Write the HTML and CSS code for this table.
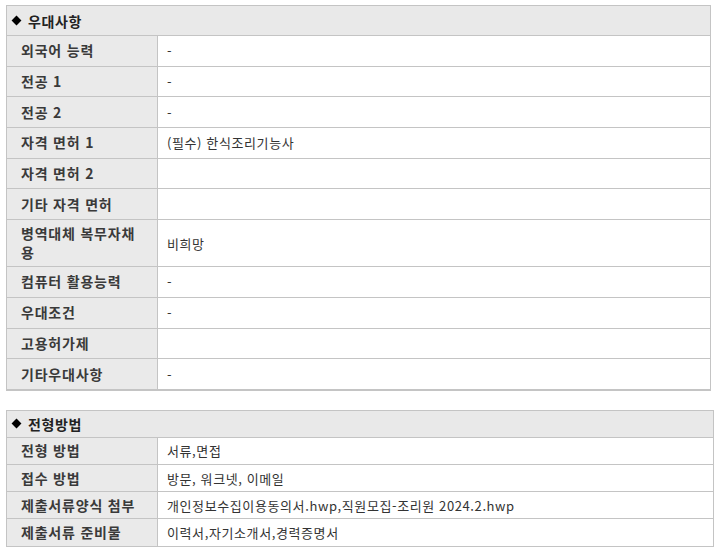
FILE: index.html
```html
<!DOCTYPE html>
<html lang="ko">
<head>
<meta charset="utf-8">
<title>우대사항</title>
<link rel="stylesheet" href="styles.css">
</head>
<body>
<div class="page">
  <section class="tbl tbl-1">
    <div class="head"><span class="dia"></span>우대사항</div>
    <div class="row"><div class="k">외국어 능력</div><div class="v">-</div></div>
    <div class="row"><div class="k">전공 1</div><div class="v">-</div></div>
    <div class="row"><div class="k">전공 2</div><div class="v">-</div></div>
    <div class="row"><div class="k">자격 면허 1</div><div class="v">(필수) 한식조리기능사</div></div>
    <div class="row"><div class="k">자격 면허 2</div><div class="v"></div></div>
    <div class="row"><div class="k">기타 자격 면허</div><div class="v"></div></div>
    <div class="row row-tall"><div class="k">병역대체 복무자채용</div><div class="v">비희망</div></div>
    <div class="row"><div class="k">컴퓨터 활용능력</div><div class="v">-</div></div>
    <div class="row"><div class="k">우대조건</div><div class="v">-</div></div>
    <div class="row"><div class="k">고용허가제</div><div class="v"></div></div>
    <div class="row"><div class="k">기타우대사항</div><div class="v">-</div></div>
  </section>

  <section class="tbl tbl-2">
    <div class="head"><span class="dia"></span>전형방법</div>
    <div class="row"><div class="k">전형 방법</div><div class="v">서류,면접</div></div>
    <div class="row"><div class="k">접수 방법</div><div class="v">방문, 워크넷, 이메일</div></div>
    <div class="row"><div class="k">제출서류양식 첨부</div><div class="v">개인정보수집이용동의서.hwp,직원모집-조리원 2024.2.hwp</div></div>
    <div class="row"><div class="k">제출서류 준비물</div><div class="v">이력서,자기소개서,경력증명서</div></div>
  </section>
</div>
</body>
</html>
```

FILE: styles.css
```css
html, body {
  margin: 0;
  background: #ffffff;
}

body {
  font-family: "Noto Sans CJK KR", "Noto Sans", sans-serif;
  font-size: 13px;
  color: #333333;
}

.page {
  padding: 5px 0 0 6px;
  display: flex;
  flex-direction: column;
  align-items: flex-start;
  gap: 19px;
}

.tbl {
  box-sizing: border-box;
  border: 1px solid #c4c4c4;
  background: #ffffff;
}

.tbl-1 {
  width: 705px;
  border-bottom-width: 2px;
}

.tbl-2 {
  width: 708px;
}

.head {
  display: flex;
  align-items: center;
  background: #e9e9e9;
  font-weight: 700;
  font-size: 14px;
  color: #222222;
  padding-left: 4px;
  letter-spacing: 0.6px;
}

.tbl-1 .head { height: 29px; }
.tbl-2 .head { height: 26px; }

.dia {
  display: inline-block;
  width: 7px;
  height: 7px;
  background: #000000;
  transform: rotate(45deg);
  margin: 0 8px 0 2px;
}

.row {
  display: grid;
  grid-template-columns: 151px 1fr;
  border-top: 1px solid #c4c4c4;
}

.tbl-1 .row { height: 29.7px; }
.tbl-1 .row-tall { height: 46px; }
.tbl-2 .row { height: 26.2px; }

.k {
  display: flex;
  align-items: center;
  background: #eaeaea;
  border-right: 1px solid #c4c4c4;
  padding: 0 14px;
  font-weight: 700;
  font-size: 14px;
  letter-spacing: 0.8px;
  line-height: 19px;
  color: #3a3a3a;
}

.v {
  display: flex;
  align-items: center;
  padding: 0 9px;
  letter-spacing: 0.6px;
  color: #333333;
}
```
